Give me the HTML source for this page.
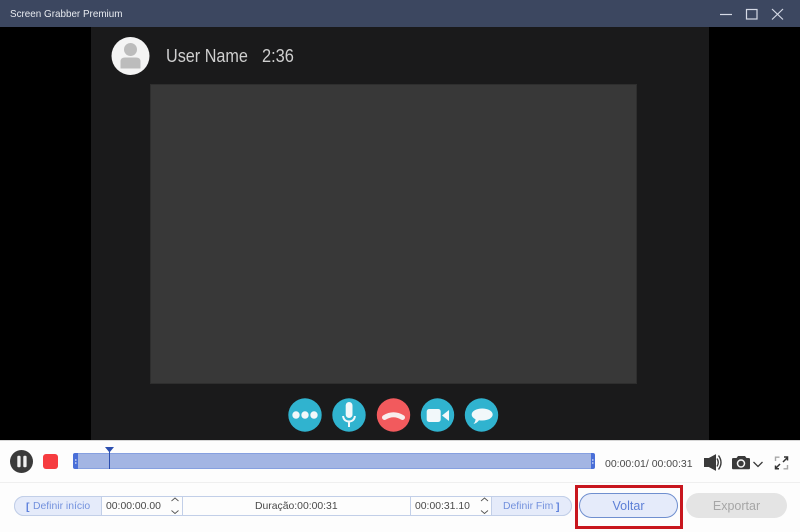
<!DOCTYPE html>
<html><head><meta charset="utf-8">
<style>
html,body{margin:0;padding:0;width:800px;height:532px;overflow:hidden;background:#fdfdfd;font-family:"Liberation Sans","DejaVu Sans",sans-serif}
div{position:absolute;box-sizing:border-box;white-space:nowrap}
svg{position:absolute;overflow:visible}
.t{font-size:10.4px;color:#4a4a4a;line-height:14px}
</style></head><body>
<div style="left:0;top:0;width:800px;height:27px;background:#3c4760"></div>
<div style="left:10px;top:7px;font-size:10.5px;line-height:14px;color:#e8ebf0;transform:scaleX(.94);transform-origin:left">Screen Grabber Premium</div>
<svg style="left:0;top:0" width="800" height="27" fill="none" stroke="#d5dae6" stroke-width="1.2">
<path d="M720 14.500H732"/><rect x="746.500" y="9.500" width="10.500" height="9.500"/><path d="M772 9L783 19.500M783 9L772 19.500"/>
</svg>
<div style="left:0;top:27px;width:800px;height:413px;background:#000"></div>
<div style="left:91px;top:27px;width:618px;height:413px;background:#1a1a1b"></div>
<div style="left:150px;top:84px;width:487px;height:300px;background:#383838;border:1px solid #2e2e2e"></div>
<svg style="left:0;top:0" width="800" height="440">
<circle cx="130.500" cy="56" r="19" fill="#f4f4f4"/>
<circle cx="130.500" cy="49.500" r="6.500" fill="#bcbcbc"/>
<path d="M120.500 68.500V61.500Q120.500 57.500 125 57.500H136Q140.500 57.500 140.500 61.500V68.500Z" fill="#bcbcbc"/>
<circle cx="305" cy="415" r="16.700" fill="#30b3cf"/>
<circle cx="296" cy="415" r="3.700" fill="#f2f8fa"/><circle cx="305" cy="415" r="3.700" fill="#f2f8fa"/><circle cx="314" cy="415" r="3.700" fill="#f2f8fa"/>
<circle cx="349" cy="415" r="16.700" fill="#30b3cf"/>
<rect x="345.700" y="402" width="6.800" height="16" rx="3.400" fill="#f2f8fa"/>
<path d="M343 416Q344 421.500 349 421.500Q354 421.500 355 416M349 421.500V427" fill="none" stroke="#f2f8fa" stroke-width="2"/>
<circle cx="393.500" cy="415" r="16.700" fill="#f25a5d"/>
<path d="M384.500 417.500Q393.500 412 402.500 417.500" fill="none" stroke="#f8eeee" stroke-width="5" stroke-linecap="round"/>
<circle cx="437.500" cy="415" r="16.700" fill="#30b3cf"/>
<rect x="426.700" y="409" width="14" height="13" rx="2.500" fill="#f2f8fa"/>
<path d="M442 415.500L449 410V421Z" fill="#f2f8fa"/>
<circle cx="481.500" cy="415" r="16.700" fill="#30b3cf"/>
<path d="M482.200 408.500C488 408.500 492.700 411 492.700 414.500C492.700 418 488 420.500 482.200 420.500C481 420.500 480 420.400 479 420.200C477.500 422.200 475.500 423.500 473.500 424C474.800 422.500 475.500 420.800 475.500 419.200C473 418 471.700 416.400 471.700 414.500C471.700 411 476.400 408.500 482.200 408.500Z" fill="#f2f8fa"/>
</svg>
<div style="left:166px;top:44px;font-size:18px;line-height:24px;color:#cfcfcf;transform:scaleX(.9);transform-origin:left">User Name</div>
<div style="left:262px;top:44px;font-size:18px;line-height:24px;color:#cfcfcf;transform:scaleX(.91);transform-origin:left">2:36</div>

<div style="left:0;top:440px;width:800px;height:92px;background:#fdfdfd;border-top:1px solid #d6d6d6"></div>
<div style="left:0;top:482px;width:800px;height:1px;background:#efefef"></div>
<svg style="left:0;top:440px" width="800" height="92">
<circle cx="21.500" cy="21.500" r="11.500" fill="#3a3a3a"/>
<rect x="17.300" y="15.700" width="3.300" height="11.600" rx="1.200" fill="#f0f0f0"/><rect x="23.300" y="15.700" width="3.300" height="11.600" rx="1.200" fill="#f0f0f0"/>
<rect x="43" y="14" width="15" height="15" rx="3" fill="#f63c40"/>
</svg>
<div style="left:76px;top:453px;width:516px;height:16px;background:#a3b5e3;border:1px solid #86a0e0;border-left:none;border-right:none"></div>
<div style="left:73px;top:453px;width:5px;height:16px;background:#4a6fd8;border-radius:2px 0 0 2px"></div>
<div style="left:591px;top:453px;width:4px;height:16px;background:#4a6fd8;border-radius:0 2px 2px 0"></div>
<svg style="left:0;top:440px" width="800" height="92">
<path d="M75 20h1.500M75 23h1.500M592 20h1.500M592 23h1.500" stroke="#dfe6f8" stroke-width="1.200"/>
<path d="M105 7H114L109.500 12.500Z" fill="#2c4fb0"/>
<path d="M109.500 11V29" stroke="#2c4fb0" stroke-width="1"/>
</svg>
<div class="t" style="left:605px;top:456.500px;font-size:10.500px">00:00:01/ 00:00:31</div>
<svg style="left:0;top:440px" width="800" height="92" fill="none">
<path d="M704.500 18.500H709L715.500 15V30L709 26.500H704.500Z" fill="#3a3a3a" stroke="#3a3a3a" stroke-width="1"/>
<path d="M717 18.500Q719.500 22.500 717 26.500M718.500 15.500Q723.500 22.500 718.500 29.500" stroke="#3a3a3a" stroke-width="1.400"/>
<path d="M732 19Q732 18 733.500 18H736.500L738 16H745L746.500 18H748.500Q750 18 750 19V28Q750 29.300 748.500 29.300H733.500Q732 29.300 732 28Z" fill="#3a3a3a"/>
<circle cx="741" cy="23.500" r="3.500" fill="#3a3a3a" stroke="#f5f5f5" stroke-width="1.500"/>
<path d="M753.500 22L758 26.500L762.500 22" stroke="#3a3a3a" stroke-width="1.300"/>
<path d="M775.500 21V17.200H779.500" stroke="#a8a8a8" stroke-width="1.400"/>
<path d="M787.500 25V28.800H783.500" stroke="#a8a8a8" stroke-width="1.400"/>
<path d="M787.500 17.500L783 22M775.500 28.500L780 24" stroke="#333" stroke-width="1.500"/>
<path d="M784 17H787.500V20.500M775.500 25.500V28.800H779" stroke="#333" stroke-width="1.500"/>
</svg>

<div style="left:14px;top:496px;width:558px;height:20px;border:1px solid #c2cfe8;border-radius:10px;background:#fdfdfd"></div>
<div style="left:14px;top:496px;width:88px;height:20px;border:1px solid #c2cfe8;border-radius:10px 0 0 10px;background:#e5ebfa"></div>
<div style="left:491px;top:496px;width:81px;height:20px;border:1px solid #c2cfe8;border-radius:0 10px 10px 0;background:#e5ebfa"></div>
<div style="left:182px;top:496px;width:1px;height:20px;background:#c2cfe8"></div>
<div style="left:410px;top:496px;width:1px;height:20px;background:#c2cfe8"></div>
<div style="left:26px;top:500px;font-size:10.500px;line-height:14px;font-weight:bold;color:#5d80dc">[</div>
<div style="left:33px;top:500px;font-size:10.400px;line-height:14px;color:#7391dd">Definir início</div>
<div class="t" style="left:106px;top:500px">00:00:00.00</div>
<div class="t" style="left:255px;top:500px">Duração:00:00:31</div>
<div class="t" style="left:415px;top:500px">00:00:31.10</div>
<div style="left:503px;top:500px;font-size:10.400px;line-height:14px;color:#7391dd">Definir Fim</div>
<div style="left:556px;top:500px;font-size:10.500px;line-height:14px;font-weight:bold;color:#5d80dc">]</div>
<svg style="left:0;top:0" width="800" height="532" fill="none" stroke="#555" stroke-width="0.900">
<path d="M171.500 501L175 498L178.500 501M171.500 510.500L175 513.500L178.500 510.500"/>
<path d="M481 501L484.500 498L488 501M481 510.500L484.500 513.500L488 510.500"/>
</svg>

<div style="left:575px;top:485px;width:108px;height:44px;border:3px solid #c8161e"></div>
<div style="left:579px;top:493px;width:99px;height:25px;border:1px solid #6f8fcf;border-radius:13px;background:#e5ebfa;text-align:center;font-size:12.500px;line-height:24px;color:#5c7fd6">Voltar</div>
<div style="left:686px;top:493px;width:101px;height:25px;border-radius:13px;background:#e4e4e4;text-align:center;font-size:12.500px;line-height:26px;color:#a6a6a6">Exportar</div>
</body></html>
